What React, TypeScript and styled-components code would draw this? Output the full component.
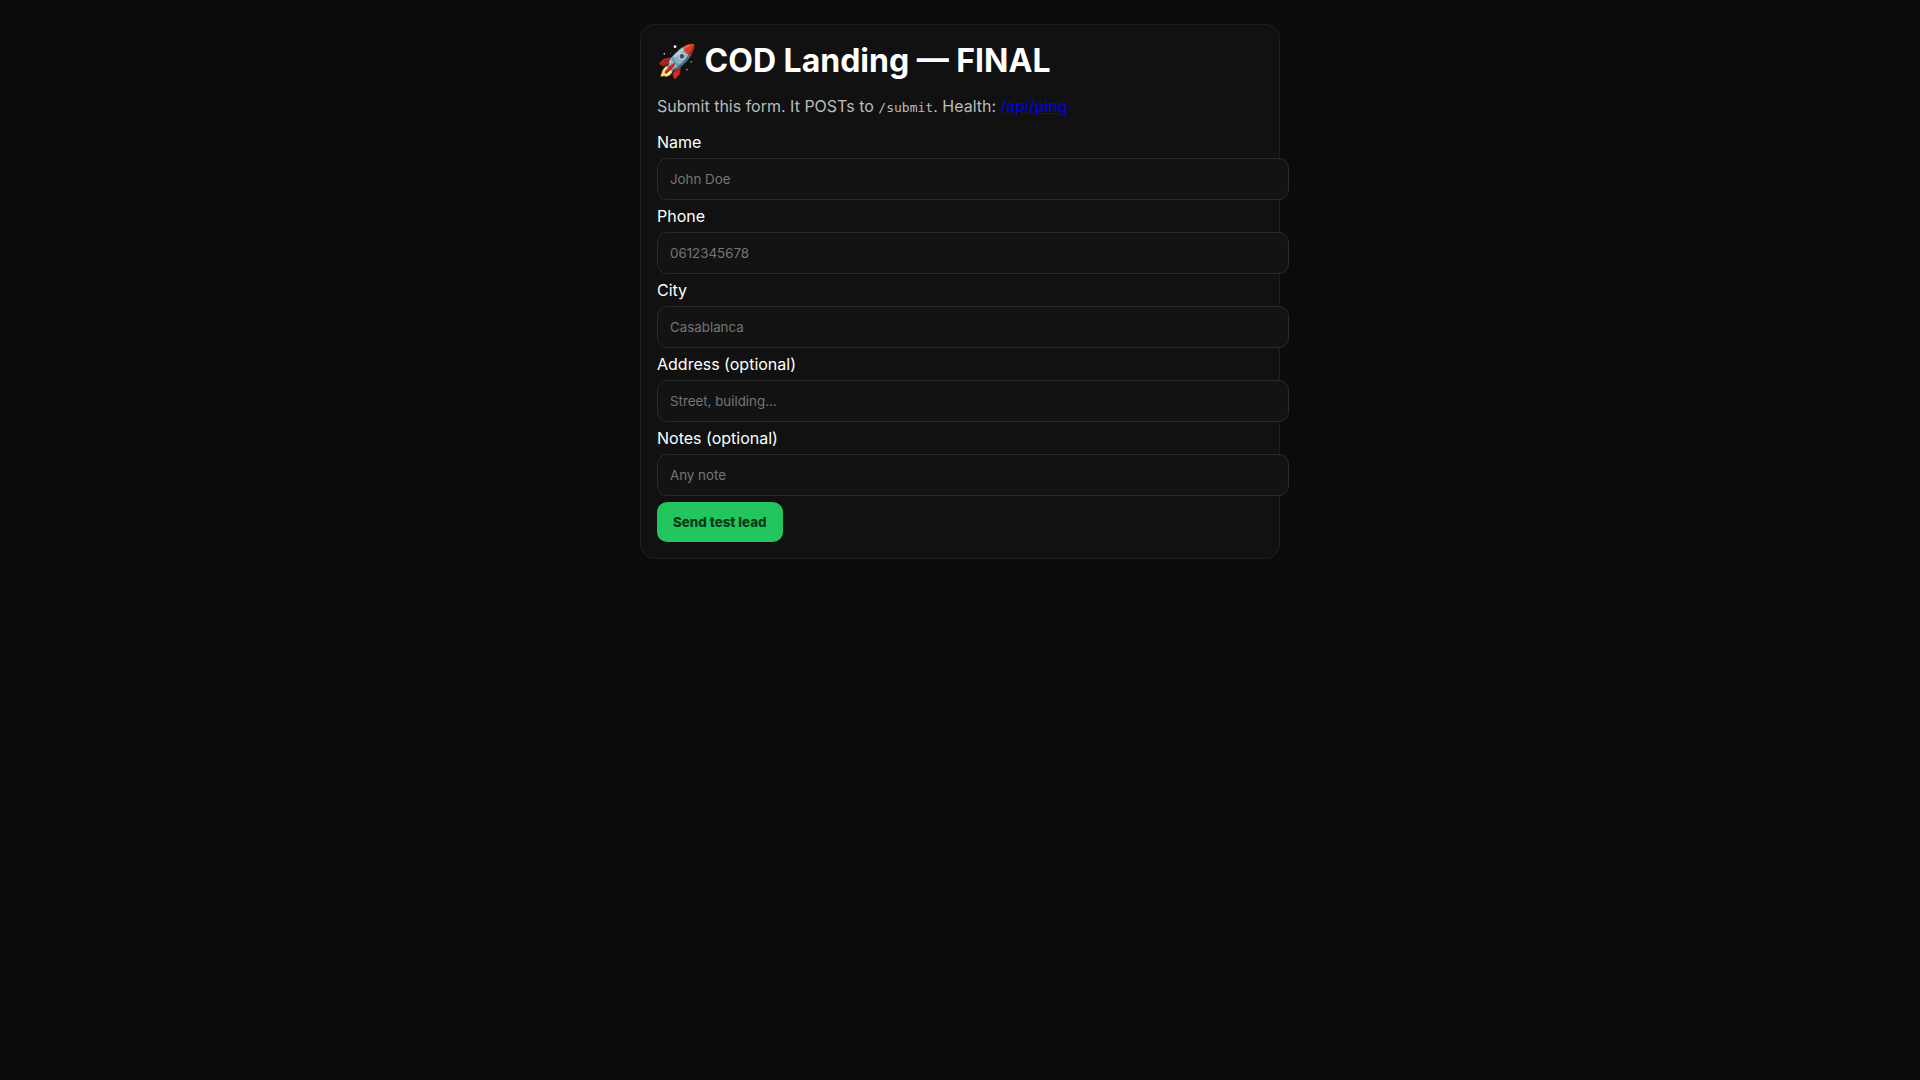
import React from 'react';
import styled, { createGlobalStyle } from 'styled-components';

const GlobalStyle = createGlobalStyle`
  body {
    margin: 0;
    padding: 24px;
    background: #0b0b0b;
    color: #fff;
    font-family: Inter, "Liberation Sans", sans-serif;
    font-size: 16px;
  }
`;

const Card = styled.main`
  max-width: 606px;
  margin: 0 auto;
  padding: 16px;
  background: #111;
  border: 1px solid #1f1f1f;
  border-radius: 14px;
`;

const Title = styled.h1`
  margin: 0 0 16px;
  font-size: 32px;
  line-height: 39px;
  font-weight: 700;
`;

const Intro = styled.p`
  margin: 16px 0 14px;
  line-height: 20px;
  color: #bbb;
`;

const Code = styled.code`
  font-family: "DejaVu Sans Mono", monospace;
  font-size: 13px;
`;

const Link = styled.a`
  color: #0000ee;
`;

const Label = styled.label`
  display: block;
  line-height: 20px;
`;

const Input = styled.input`
  display: block;
  width: 100%;
  margin: 6px 0;
  padding: 12px;
  background: #131313;
  color: #fff;
  border: 1px solid #2a2a2a;
  border-radius: 10px;
  font-family: inherit;
  line-height: 16px;
`;

const Submit = styled.button`
  padding: 12px 16px;
  background: #22c55e;
  color: #053b1a;
  border: 0;
  border-radius: 10px;
  font-family: inherit;
  line-height: 16px;
  font-weight: 800;
  cursor: pointer;
`;

const fields = [
  { name: 'name', label: 'Name', placeholder: 'John Doe' },
  { name: 'phone', label: 'Phone', placeholder: '0612345678' },
  { name: 'city', label: 'City', placeholder: 'Casablanca' },
  { name: 'address', label: 'Address (optional)', placeholder: 'Street, building...' },
  { name: 'notes', label: 'Notes (optional)', placeholder: 'Any note' },
];

export default function App() {
  return (
    <>
      <GlobalStyle />
      <Card>
        <Title>🚀 COD Landing — FINAL</Title>
        <Intro>
          Submit this form. It POSTs to <Code>/submit</Code>. Health: <Link href="/api/ping">/api/ping</Link>
        </Intro>
        <form action="/submit" method="post">
          {fields.map((f) => (
            <React.Fragment key={f.name}>
              <Label htmlFor={f.name}>{f.label}</Label>
              <Input id={f.name} name={f.name} placeholder={f.placeholder} />
            </React.Fragment>
          ))}
          <Submit type="submit">Send test lead</Submit>
        </form>
      </Card>
    </>
  );
}
